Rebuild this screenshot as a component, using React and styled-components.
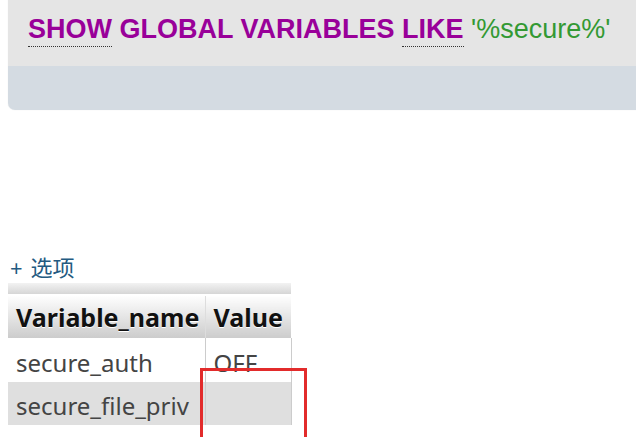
import React from 'react';
import styled, { createGlobalStyle } from 'styled-components';

const GlobalStyle = createGlobalStyle`
  html, body {
    margin: 0;
    padding: 0;
    background: #fff;
    overflow: hidden;
  }
`;

const Page = styled.div`
  width: 636px;
  height: 437px;
  overflow: hidden;
  padding-left: 8px;
  box-sizing: border-box;
`;

const QueryPanel = styled.div`
  margin-right: -20px;
  border-bottom-left-radius: 7px;
  overflow: hidden;
  box-shadow: 0 0 1px rgba(0, 0, 0, 0.15);
`;

const QueryBox = styled.div`
  height: 66px;
  background: #e5e5e5;
  padding: 14px 0 0 20px;
  box-sizing: border-box;
  font-family: 'Liberation Sans', Arial, sans-serif;
  font-size: 27px;
  white-space: nowrap;
`;

const Keyword = styled.span`
  color: #990099;
  font-weight: bold;
  border-bottom: ${(p) => (p.$doc ? '1px dotted #333' : 'none')};
  padding-bottom: 2px;
`;

const Str = styled.span`
  color: #339933;
`;

const QueryTools = styled.div`
  height: 44px;
  background: #d4dbe2;
`;

const OptionsLink = styled.a`
  display: block;
  margin: 144px 0 0 2px;
  font-family: 'Noto Sans', 'Noto Sans CJK SC', sans-serif;
  font-size: 22px;
  line-height: 26px;
  color: #235a81;
  text-decoration: none;
`;

const Plus = styled.span`
  margin-right: 8px;
`;

const TableWrap = styled.div`
  position: relative;
  margin-top: 3px;
  width: 283px;
`;

const TopBar = styled.div`
  height: 11px;
  background: linear-gradient(#f2f2f2, #d6d6d6);
  margin-bottom: 2px;
`;

const Table = styled.table`
  border-collapse: collapse;
  table-layout: fixed;
  width: 283px;
  font-family: 'Noto Sans', 'Open Sans', sans-serif;
  font-size: 24px;
`;

const Col = styled.col`
  width: ${(p) => p.$w}px;
`;

const Th = styled.th`
  height: 42px;
  padding: 0 0 0 8px;
  text-align: left;
  font-size: 25px;
  font-weight: bold;
  color: #111;
  text-shadow: 0 1px 0 #fff;
  background: linear-gradient(#fefefe, #cccccc);
  border-right: 1px solid #ddd;
  white-space: nowrap;
  overflow: hidden;
  &:last-child {
    border-right: none;
  }
`;

const Row = styled.tr`
  background: ${(p) => (p.$odd ? '#fff' : '#dfdfdf')};
`;

const Td = styled.td`
  height: ${(p) => p.$h}px;
  padding: 4px 0 0 8px;
  box-sizing: border-box;
  color: #444;
  white-space: nowrap;
  overflow: hidden;
  border-right: 1px solid #ccc;
`;

const Highlight = styled.div`
  position: absolute;
  left: 192px;
  top: 85px;
  width: 101px;
  height: 120px;
  border: 3px solid #e22b2b;
`;

const rows = [
  { name: 'secure_auth', value: 'OFF' },
  { name: 'secure_file_priv', value: '' },
];

export default function App() {
  return (
    <>
      <GlobalStyle />
      <Page>
        <QueryPanel>
          <QueryBox>
            <Keyword $doc>SHOW</Keyword> <Keyword>GLOBAL VARIABLES</Keyword>{' '}
            <Keyword $doc>LIKE</Keyword> <Str>'%secure%'</Str>
          </QueryBox>
          <QueryTools />
        </QueryPanel>
        <OptionsLink href="#">
          <Plus>+</Plus>选项
        </OptionsLink>
        <TableWrap>
          <TopBar />
          <Table>
            <colgroup>
              <Col $w={197} />
              <Col $w={86} />
            </colgroup>
            <thead>
              <tr>
                <Th>Variable_name</Th>
                <Th>Value</Th>
              </tr>
            </thead>
            <tbody>
              {rows.map((r, i) => (
                <Row key={r.name} $odd={i % 2 === 0}>
                  <Td $h={i === 0 ? 44 : 43}>{r.name}</Td>
                  <Td $h={i === 0 ? 44 : 43}>{r.value}</Td>
                </Row>
              ))}
            </tbody>
          </Table>
          <Highlight />
        </TableWrap>
      </Page>
    </>
  );
}
